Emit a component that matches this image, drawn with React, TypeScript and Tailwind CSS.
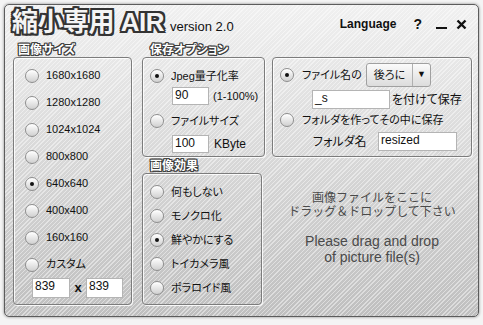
const font = "font-['Liberation_Sans','Noto_Sans_CJK_JP',sans-serif]";
const outline =
  "text-white [text-shadow:-1px_-1px_0_#3c3c3c,1px_-1px_0_#3c3c3c,-1px_1px_0_#3c3c3c,1px_1px_0_#3c3c3c,0_1px_0_#3c3c3c,0_-1px_0_#3c3c3c,1px_0_0_#3c3c3c,-1px_0_0_#3c3c3c]";
const bigOutline =
  "text-[#f4f4f4] [text-shadow:-2px_-2px_0_#333,2px_-2px_0_#333,-2px_2px_0_#333,2px_2px_0_#333,0_2px_0_#333,0_-2px_0_#333,2px_0_0_#333,-2px_0_0_#333,-1px_-2px_0_#333,1px_2px_0_#333]";
const panel =
  "rounded-[4px] border border-[#7c7c7c] shadow-[inset_1px_1px_0_rgba(255,255,255,0.85),1px_1px_0_rgba(255,255,255,0.85)]";
const field =
  "border border-[#b4b4b4] bg-white px-[2px] text-[12px] leading-[15px] text-[#111]";

function Radio({ on }: { on?: boolean }) {
  return (
    <span className="flex h-[14px] w-[14px] shrink-0 items-center justify-center rounded-full border border-[#8e8e8e] bg-[linear-gradient(to_bottom,#ffffff,#d0d0d0)] shadow-[inset_0_1px_1px_#fff]">
      {on && <span className="h-[4px] w-[4px] rounded-full bg-[#111]" />}
    </span>
  );
}

function Label({ children }: { children: string }) {
  return (
    <div className={`h-[13px] text-[12px] font-bold leading-[13px] [font-feature-settings:'palt'] ${outline}`}>
      {children}
    </div>
  );
}

function Option({ label, on, h }: { label: string; on?: boolean; h: string }) {
  return (
    <div className={`flex ${h} items-center gap-[7px] text-[11px] text-[#111] [font-feature-settings:'palt']`}>
      <Radio on={on} />
      <span>{label}</span>
    </div>
  );
}

export default function App() {
  const sizes = ["1680x1680", "1280x1280", "1024x1024", "800x800", "640x640", "400x400", "160x160", "カスタム"];
  const effects = ["何もしない", "モノクロ化", "鮮やかにする", "トイカメラ風", "ポラロイド風"];

  return (
    <div className={`h-[325px] w-[483px] bg-[#f4f4f4] p-[4px] ${font}`}>
      <div className="flex h-[313px] w-[475px] flex-col rounded-[5px] border border-[#5c5c5c] bg-[image:repeating-linear-gradient(135deg,rgba(255,255,255,0.45)_0px,rgba(255,255,255,0.45)_1px,transparent_1px,transparent_3px),linear-gradient(to_bottom,#f0f0f0,#bfbfbf)] shadow-[0_0_3px_rgba(0,0,0,0.45)]">
        {/* title bar */}
        <div className="flex h-[39px] items-start pl-[7px] pr-[11px]">
          <div className="flex items-baseline pt-[2px]">
            <span className={`text-[26px] font-bold leading-[30px] tracking-[-0.5px] ${bigOutline}`}>縮小専用 AIR</span>
            <span className="ml-[6px] text-[13px] text-[#111]">version 2.0</span>
          </div>
          <div className="ml-auto mt-[7px] flex h-[24px] items-center text-[#111]">
            <span className="text-[12px] font-bold">Language</span>
            <span className="ml-[17px] text-[14px] font-bold">?</span>
            <span className="ml-[14px] mt-[8px] h-[2px] w-[11px] bg-[#111]" />
            <svg className="ml-[9px]" width="11" height="11" viewBox="0 0 11 11">
              <path d="M1.5 1.5l8 8M9.5 1.5l-8 8" stroke="#111" strokeWidth="2.4" />
            </svg>
          </div>
        </div>

        <div className="flex pl-[8px]">
          {/* 画像サイズ */}
          <div className="w-[119px]">
            <div className="pl-[5px]">
              <Label>画像サイズ</Label>
            </div>
            <div className={`h-[248px] pl-[11px] pt-[4px] ${panel}`}>
              {sizes.map((s) => (
                <Option key={s} label={s} on={s === "640x640"} h="h-[27px]" />
              ))}
              <div className="ml-[7px] flex items-center">
                <div className={`h-[20px] w-[38px] ${field}`}>839</div>
                <span className="w-[16px] text-center text-[13px] font-bold text-[#111]">x</span>
                <div className={`h-[20px] w-[37px] ${field}`}>839</div>
              </div>
            </div>
          </div>

          {/* 保存オプション / 画像効果 */}
          <div className="ml-[10px] w-[123px]">
            <div className="pl-[8px]">
              <Label>保存オプション</Label>
            </div>
            <div className={`h-[100px] pl-[7px] pt-[7px] ${panel}`}>
              <Option label="Jpeg量子化率" on h="h-[22px]" />
              <div className="ml-[22px] flex items-center">
                <div className={`h-[18px] w-[37px] ${field}`}>90</div>
                <span className="ml-[4px] text-[11px] text-[#111]">(1-100%)</span>
              </div>
              <div className="mt-[5px]">
                <Option label="ファイルサイズ" h="h-[22px]" />
              </div>
              <div className="ml-[22px] mt-[3px] flex items-center">
                <div className={`h-[18px] w-[37px] ${field}`}>100</div>
                <span className="ml-[5px] text-[12px] text-[#111]">KByte</span>
              </div>
            </div>
            <div className="mt-[3px] pl-[8px]">
              <Label>画像効果</Label>
            </div>
            <div className={`h-[132px] w-[120px] pl-[7px] pt-[6px] ${panel}`}>
              {effects.map((e) => (
                <Option key={e} label={e} on={e === "鮮やかにする"} h="h-[24px]" />
              ))}
            </div>
          </div>

          {/* ファイル名 */}
          <div className="ml-[7px] flex w-[200px] flex-col">
            <div className="h-[13px]" />
            <div className={`h-[100px] pl-[7px] pt-[5px] text-[11px] text-[#111] [font-feature-settings:'palt'] ${panel}`}>
              <div className="flex h-[24px] items-center">
                <Radio on />
                <span className="ml-[8px] w-[64px]">ファイル名の</span>
                <div className="flex h-[24px] w-[65px] items-center rounded-[3px] border border-[#a0a0a0] bg-[linear-gradient(to_bottom,#fbfbfb,#dcdcdc)]">
                  <span className="w-[45px] text-center">後ろに</span>
                  <span className="h-[22px] w-px bg-[#b0b0b0]" />
                  <span className="flex-1 text-center text-[9px]">▼</span>
                </div>
              </div>
              <div className="ml-[32px] mt-[3px] flex items-center">
                <div className={`h-[19px] w-[78px] ${field}`}>_s</div>
                <span className="ml-[2px] text-[12px]">を付けて保存</span>
              </div>
              <div className="mt-[1px] flex h-[20px] items-center">
                <Radio />
                <span className="ml-[8px]">フォルダを作ってその中に保存</span>
              </div>
              <div className="ml-[33px] mt-[2px] flex items-center">
                <span className="w-[65px] text-[12px]">フォルダ名</span>
                <div className={`h-[19px] w-[79px] ${field}`}>resized</div>
              </div>
            </div>
            <div className="flex flex-1 flex-col items-center justify-center pb-[6px] text-[#4a4a4a]">
              <div className="text-[12px] leading-[14px]">画像ファイルをここに</div>
              <div className="text-[12px] leading-[14px]">ドラッグ＆ドロップして下さい</div>
              <div className="mt-[14px] text-[14px] leading-[16px]">Please drag and drop</div>
              <div className="text-[14px] leading-[16px]">of picture file(s)</div>
            </div>
          </div>
        </div>
      </div>
    </div>
  );
}
